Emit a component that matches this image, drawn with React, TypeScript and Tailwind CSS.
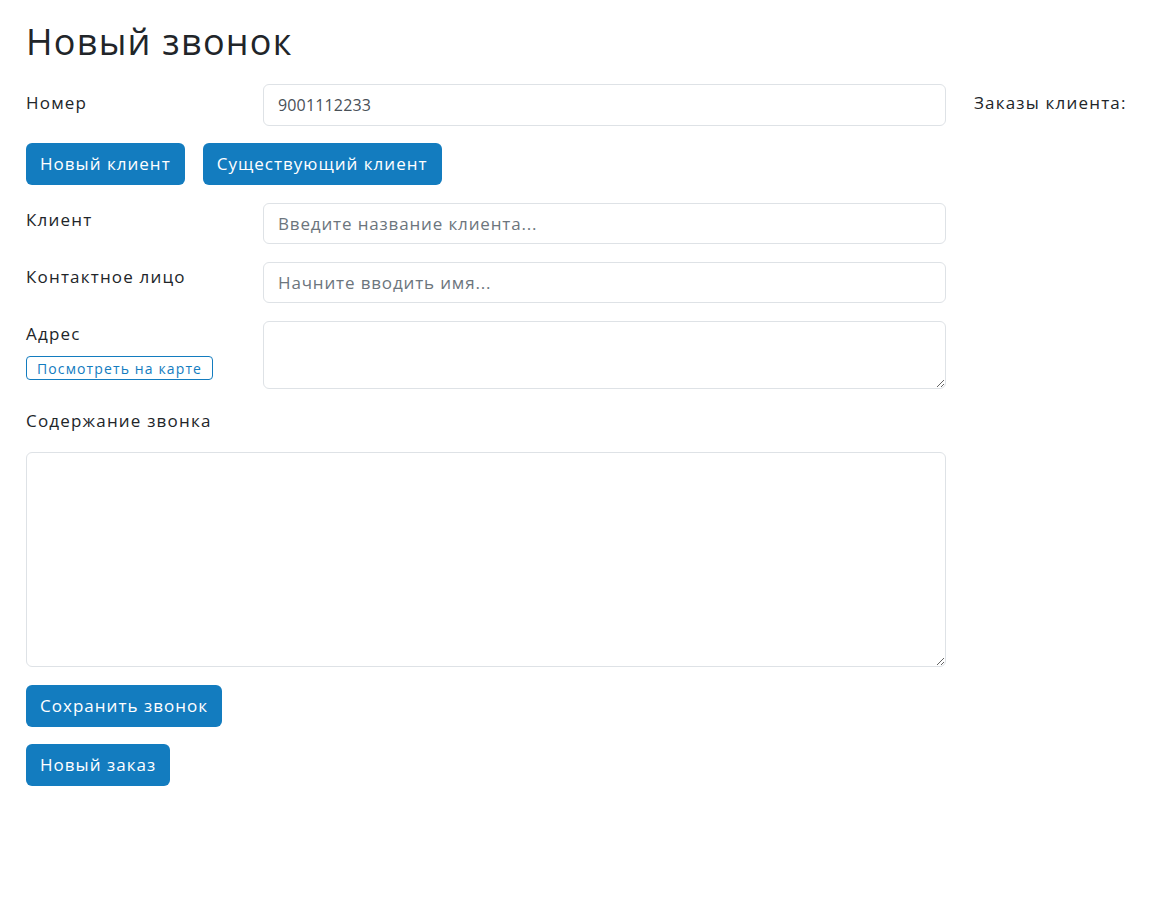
import React from "react";

const font = { fontFamily: '"Open Sans", "Noto Sans", sans-serif' };

const inputCls =
  "h-[41px] w-full rounded-[6px] border border-[#dee2e6] bg-white px-[14px] text-[17px] tracking-[0.05em] text-[#495057] placeholder:text-[#6c757d] outline-none";

const btnCls =
  "h-[42px] rounded-[6px] bg-[#137cbf] px-[14px] text-[17px] leading-[24px] tracking-[0.06em] text-white";

const labelCls = "w-[237px] shrink-0 text-[17px] leading-[24px] tracking-[0.07em]";

export default function App() {
  return (
    <div className="min-h-[912px] bg-white px-[26px] pt-[20px] text-[#212529]" style={font}>
      <h1 className="mb-[20px] text-[36px] leading-[44px] tracking-[0.035em]">Новый звонок</h1>
      <div className="flex gap-[28px]">
        {/* Форма */}
        <div className="flex w-[920px] shrink-0 flex-col">
          <div className="flex">
            <label className={labelCls + " pt-[7px]"}>Номер</label>
            <input
              className={inputCls + " h-[42px] !text-[16px] !tracking-[0.01em]"}
              defaultValue="9001112233"
            />
          </div>

          <div className="mt-[17px] flex gap-[18px]">
            <button className={btnCls}>Новый клиент</button>
            <button className={btnCls}>Существующий клиент</button>
          </div>

          <div className="mt-[18px] flex">
            <label className={labelCls + " pt-[5px]"}>Клиент</label>
            <input className={inputCls} placeholder="Введите название клиента..." />
          </div>

          <div className="mt-[18px] flex">
            <label className={labelCls + " pt-[3px]"}>Контактное лицо</label>
            <input className={inputCls} placeholder="Начните вводить имя..." />
          </div>

          <div className="mt-[18px] flex">
            <div className="flex w-[237px] shrink-0 flex-col items-start">
              <label className="pt-[1px] text-[17px] leading-[24px] tracking-[0.07em]">Адрес</label>
              <button className="mt-[10px] h-[24px] rounded-[4px] border border-[#137cbf] px-[10px] text-[14px] tracking-[0.08em] text-[#137cbf]">
                Посмотреть на карте
              </button>
            </div>
            <textarea className="h-[68px] w-full rounded-[6px] border border-[#dee2e6] px-[14px] py-[6px] outline-none" />
          </div>

          <label className="mt-[20px] text-[17px] leading-[24px] tracking-[0.07em]">Содержание звонка</label>

          <textarea className="mt-[19px] h-[215px] w-full rounded-[6px] border border-[#dee2e6] px-[14px] py-[6px] outline-none" />

          <div className="mt-[18px]">
            <button className={btnCls}>Сохранить звонок</button>
          </div>
          <div className="mt-[17px]">
            <button className={btnCls}>Новый заказ</button>
          </div>
        </div>

        {/* Заказы */}
        <div className="whitespace-nowrap pt-[7px] text-[17px] leading-[24px] tracking-[0.07em]">
          Заказы клиента:
        </div>
      </div>
    </div>
  );
}
